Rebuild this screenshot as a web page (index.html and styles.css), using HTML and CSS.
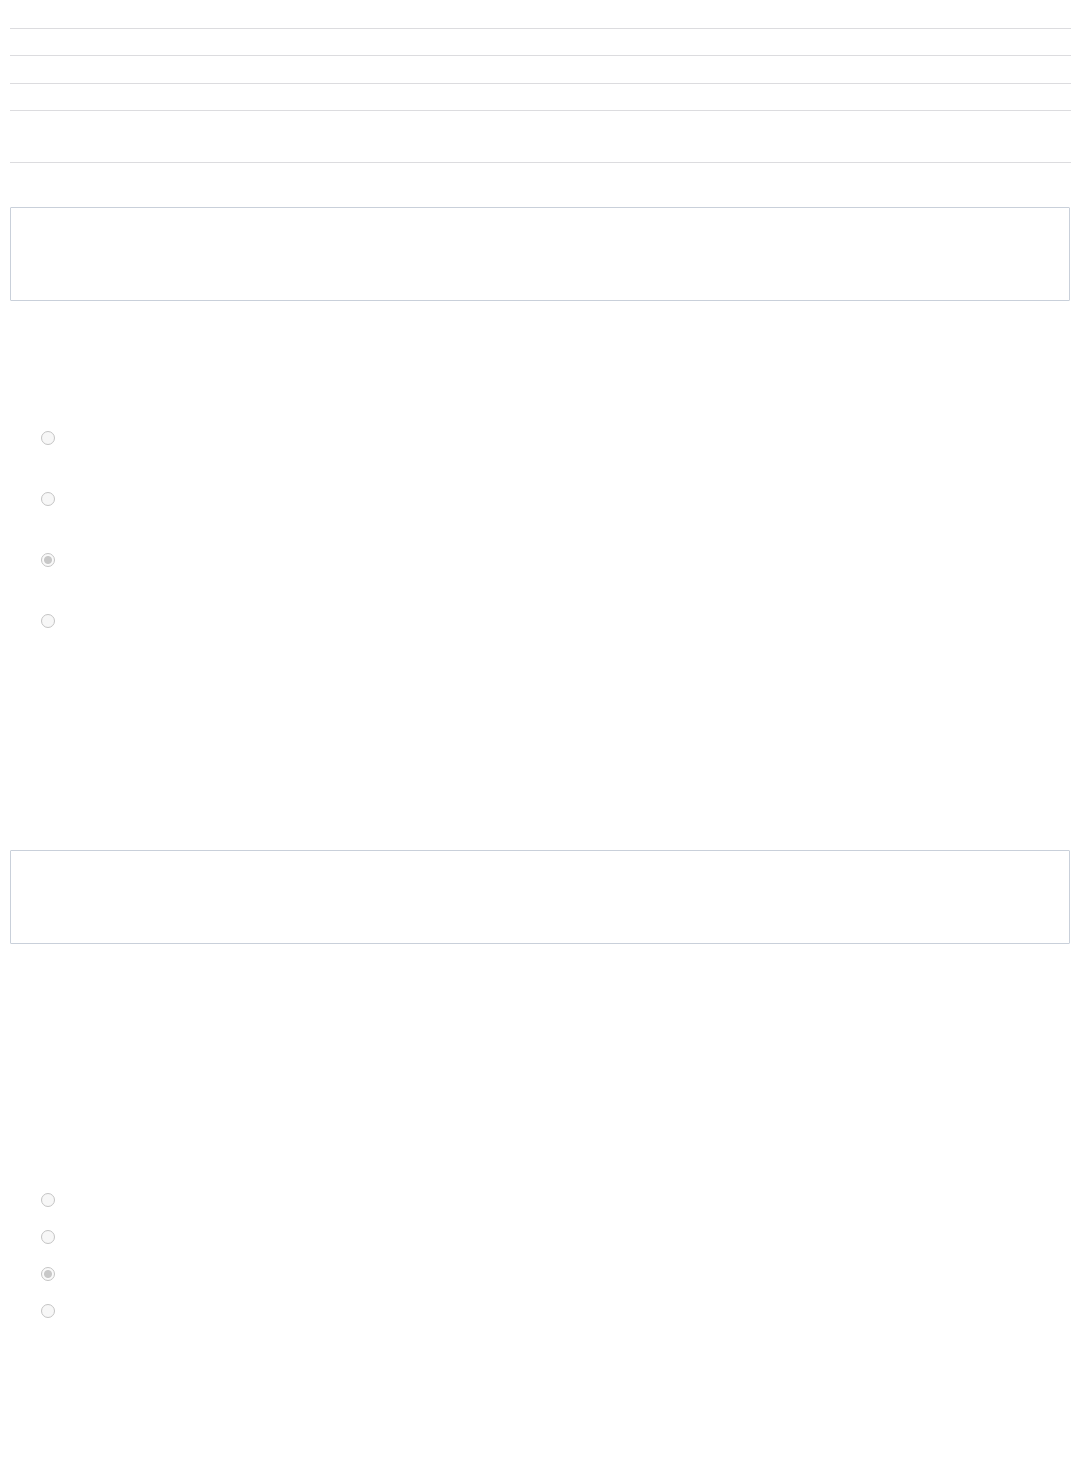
FILE: index.html
```html
<!DOCTYPE html>
<html lang="en">
<head>
<meta charset="UTF-8">
<meta name="viewport" content="width=device-width, initial-scale=1.0">
<title>Form</title>
<link rel="stylesheet" href="styles.css">
</head>
<body>
<div class="page">
    <ul class="rows">
        <li class="row row-a"></li>
        <li class="row row-b"></li>
        <li class="row row-c"></li>
        <li class="row row-b"></li>
        <li class="row row-tall"></li>
    </ul>

    <div class="field-box first-box"></div>

    <div class="choices wide">
        <label class="choice"><input type="radio" name="q1" disabled></label>
        <label class="choice"><input type="radio" name="q1" disabled></label>
        <label class="choice"><input type="radio" name="q1" disabled checked></label>
        <label class="choice"><input type="radio" name="q1" disabled></label>
    </div>

    <div class="field-box second-box"></div>

    <div class="choices compact">
        <label class="choice"><input type="radio" name="q2" disabled></label>
        <label class="choice"><input type="radio" name="q2" disabled></label>
        <label class="choice"><input type="radio" name="q2" disabled checked></label>
        <label class="choice"><input type="radio" name="q2" disabled></label>
    </div>
</div>
</body>
</html>
```

FILE: styles.css
```css
body {
    margin: 0;
    background-color: #fff;
    font-family: "Open Sans", Arial, sans-serif;
}

.page {
    padding: 0 8px 0 10px;
}

.rows {
    list-style: none;
    margin: 0;
    padding: 0;
}

.row {
    border-bottom: 1px solid #dcdcdf;
}

.row-a {
    height: 28px;
}

.row-b {
    height: 26px;
}

.row-c {
    height: 27px;
}

.row-tall {
    height: 51px;
}

.field-box {
    box-sizing: border-box;
    height: 94px;
    margin-right: 1px;
    border: 1px solid #c9d0da;
    border-radius: 1px;
}

.first-box {
    margin-top: 44px;
}

.second-box {
    margin-top: 199px;
}

.choices {
    display: flex;
    flex-direction: column;
    padding-left: 31px;
}

.choice {
    display: flex;
    align-items: center;
}

.choice input {
    -webkit-appearance: none;
    appearance: none;
    box-sizing: border-box;
    width: 14px;
    height: 14px;
    margin: 0;
    border: 1px solid #c4c4c4;
    border-radius: 50%;
    background-color: #f7f7f7;
}

.choice input:checked {
    background: radial-gradient(circle, #c8c8c8 0, #c8c8c8 3.5px, #fafafa 4.5px);
}

.wide {
    padding-top: 106px;
}

.wide .choice {
    height: 61px;
}

.compact {
    padding-top: 238px;
}

.compact .choice {
    height: 36.8px;
}
```
